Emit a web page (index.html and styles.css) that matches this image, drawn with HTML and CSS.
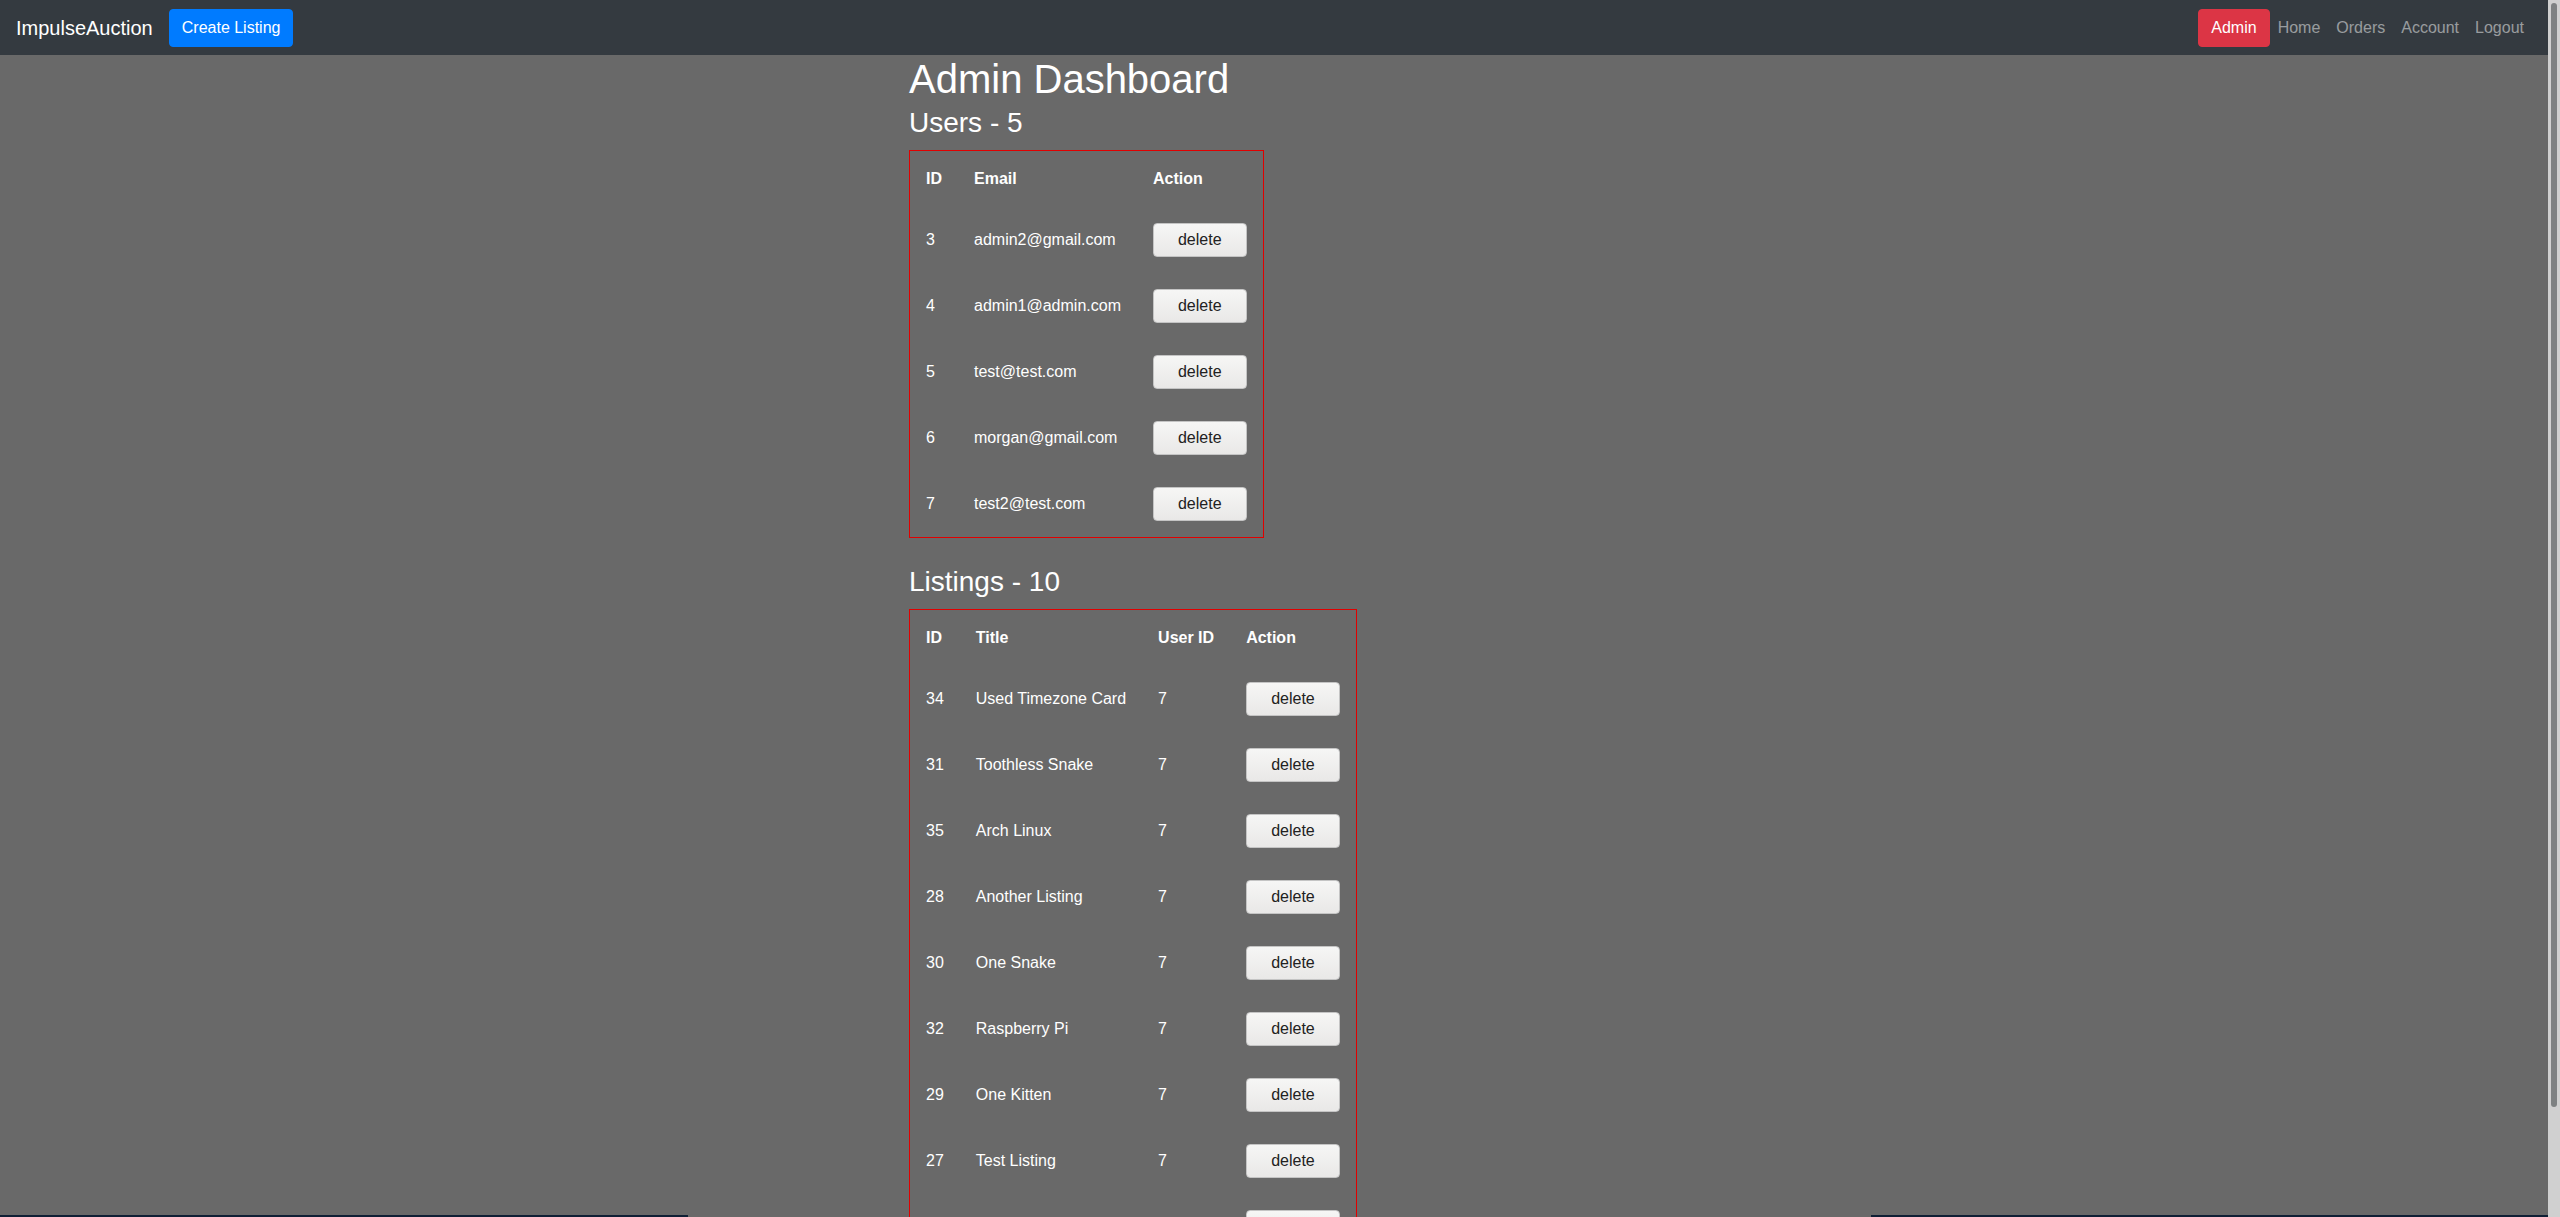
FILE: index.html
```html
<!DOCTYPE html>
<html lang="en">
<head>
<meta charset="utf-8">
<title>ImpulseAuction - Admin</title>
<link rel="stylesheet" href="styles.css">
</head>
<body>
<nav class="navbar">
  <a class="brand" href="#">ImpulseAuction</a>
  <a class="btn btn-primary" href="#">Create Listing</a>
  <ul class="nav-links">
    <li><a class="btn btn-danger" href="#">Admin</a></li>
    <li><a class="nav-link" href="#">Home</a></li>
    <li><a class="nav-link" href="#">Orders</a></li>
    <li><a class="nav-link" href="#">Account</a></li>
    <li><a class="nav-link" href="#">Logout</a></li>
  </ul>
</nav>
<main class="content">
  <h1 class="page-title">Admin Dashboard</h1>
  <h2 class="section-title">Users - 5</h2>
  <table class="data-table">
    <thead>
      <tr><th>ID</th><th>Email</th><th>Action</th></tr>
    </thead>
    <tbody>
      <tr><td>3</td><td>admin2@gmail.com</td><td><button class="del-btn">delete</button></td></tr>
      <tr><td>4</td><td>admin1@admin.com</td><td><button class="del-btn">delete</button></td></tr>
      <tr><td>5</td><td>test@test.com</td><td><button class="del-btn">delete</button></td></tr>
      <tr><td>6</td><td>morgan@gmail.com</td><td><button class="del-btn">delete</button></td></tr>
      <tr><td>7</td><td>test2@test.com</td><td><button class="del-btn">delete</button></td></tr>
    </tbody>
  </table>
  <h2 class="section-title">Listings - 10</h2>
  <table class="data-table">
    <thead>
      <tr><th>ID</th><th>Title</th><th>User ID</th><th>Action</th></tr>
    </thead>
    <tbody>
      <tr><td>34</td><td>Used Timezone Card</td><td>7</td><td><button class="del-btn">delete</button></td></tr>
      <tr><td>31</td><td>Toothless Snake</td><td>7</td><td><button class="del-btn">delete</button></td></tr>
      <tr><td>35</td><td>Arch Linux</td><td>7</td><td><button class="del-btn">delete</button></td></tr>
      <tr><td>28</td><td>Another Listing</td><td>7</td><td><button class="del-btn">delete</button></td></tr>
      <tr><td>30</td><td>One Snake</td><td>7</td><td><button class="del-btn">delete</button></td></tr>
      <tr><td>32</td><td>Raspberry Pi</td><td>7</td><td><button class="del-btn">delete</button></td></tr>
      <tr><td>29</td><td>One Kitten</td><td>7</td><td><button class="del-btn">delete</button></td></tr>
      <tr><td>27</td><td>Test Listing</td><td>7</td><td><button class="del-btn">delete</button></td></tr>
      <tr><td>33</td><td>Old Guitar</td><td>7</td><td><button class="del-btn">delete</button></td></tr>
      <tr><td>36</td><td>Red Kettle</td><td>7</td><td><button class="del-btn">delete</button></td></tr>
    </tbody>
  </table>
</main>
<div class="bottom-strip">
  <span class="strip-left"></span>
  <span class="strip-gap"></span>
  <span class="strip-right"></span>
</div>
<div class="fake-scrollbar"><div class="fake-thumb"></div></div>
</body>
</html>
```

FILE: styles.css
```css
html {
  background: #696969;
}
body {
  margin: 0;
  width: calc(100% - 12px);
  background: #696969;
  font-family: "Liberation Sans", Arial, sans-serif;
  font-size: 16px;
  color: #fff;
}
a {
  text-decoration: none;
}
.navbar {
  display: flex;
  align-items: center;
  height: 55px;
  padding: 0 16px;
  background: #343a40;
  box-sizing: border-box;
}
.brand {
  color: #fff;
  font-size: 20px;
  line-height: 30px;
  margin-right: 16px;
}
.btn {
  display: inline-block;
  font-size: 16px;
  line-height: 24px;
  padding: 6px 12px;
  border: 1px solid transparent;
  border-radius: 4px;
  color: #fff;
}
.btn-primary {
  background: #007bff;
  border-color: #007bff;
}
.btn-danger {
  background: #dc3545;
  border-color: #dc3545;
}
.nav-links {
  display: flex;
  align-items: center;
  list-style: none;
  margin: 0 0 0 auto;
  padding: 0;
}
.nav-link {
  display: block;
  padding: 8px;
  line-height: 24px;
  color: rgba(255, 255, 255, 0.5);
}
.content {
  width: 730px;
  margin: 0 auto;
  padding-bottom: 16px;
}
.page-title {
  font-size: 40px;
  font-weight: 500;
  line-height: 48px;
  margin: 0 0 3px;
}
.section-title {
  font-size: 28px;
  font-weight: 500;
  line-height: 34px;
  margin: 0 0 10px;
}
.data-table {
  border: 1px solid #e00000;
  border-collapse: separate;
  border-spacing: 0;
  margin-bottom: 27px;
}
.data-table th {
  text-align: left;
  font-weight: bold;
  padding: 19px 16px;
  line-height: 18px;
}
.data-table td {
  padding: 16px;
  line-height: 18px;
  vertical-align: middle;
  white-space: nowrap;
}
.del-btn {
  font-family: "Liberation Sans", Arial, sans-serif;
  font-size: 16px;
  line-height: 18px;
  padding: 7px 24px;
  color: #222;
  background: linear-gradient(#f6f6f5, #e9e8e7);
  border: 1px solid #c4c4c4;
  border-radius: 4px;
  display: block;
}
.bottom-strip {
  position: fixed;
  left: 0;
  right: 12px;
  bottom: 0;
  height: 2px;
  display: flex;
}
.strip-left {
  width: 688px;
  background: #0f1f35;
}
.strip-gap {
  width: 1183px;
}
.strip-right {
  flex: 1;
  background: #0f1f35;
}
.fake-scrollbar {
  position: fixed;
  top: 0;
  right: 0;
  width: 12px;
  height: 100vh;
  background: #d0d0d0;
}
.fake-thumb {
  margin: 3px 3px 0;
  width: 6px;
  height: 1104px;
  border-radius: 3px;
  background: #7e8182;
}
```
